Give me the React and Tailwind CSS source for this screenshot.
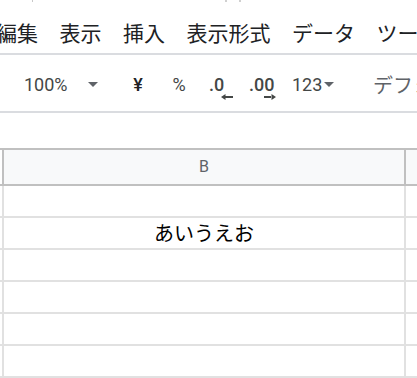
import React from 'react';

const menuItems = ['編集', '表示', '挿入', '表示形式', 'データ', 'ツール'];

const Caret = () => (
  <svg width="10" height="5" viewBox="0 0 10 5">
    <path d="M0 0 L10 0 L5 5 Z" fill="#5f6368" />
  </svg>
);

const Arrow = ({ dir }) => (
  <svg width="12" height="6" viewBox="0 0 12 6">
    {dir === 'left' ? (
      <path d="M0 3 L4.5 0 L4.5 6 Z M4 2 H12 V4 H4 Z" fill="#444746" />
    ) : (
      <path d="M12 3 L7.5 0 L7.5 6 Z M0 2 H8 V4 H0 Z" fill="#444746" />
    )}
  </svg>
);

const Sep = () => <div className="w-[2px] h-[30px] bg-[#dadce0]" />;

const rows = ['', 'あいうえお', '', '', '', ''];

export default function App() {
  return (
    <div className="w-[417px] h-[378px] overflow-hidden bg-white font-['Roboto','Noto_Sans_CJK_JP',sans-serif]">
      {/* Menu bar */}
      <div className="h-[55px] border-b-2 border-[#dadce0]">
        <div className="flex h-[3px]">
          <div className="ml-[32px] w-[1px] h-[2px] bg-[#c8c8c8]" />
          <div className="ml-[192px] w-[2px] h-[2px] bg-[#d0d0d0]" />
          <div className="ml-[12px] w-[2px] h-[2px] bg-[#d0d0d0]" />
        </div>
        <div className="flex items-center gap-[21.5px] ml-[-4px] pt-[8px] h-[50px] whitespace-nowrap text-[21px] leading-none text-[#202124] font-['Noto_Sans_CJK_JP',sans-serif]">
          {menuItems.map((m) => (
            <span key={m}>{m}</span>
          ))}
        </div>
      </div>

      {/* Toolbar */}
      <div className="h-[58px] pt-[3px] border-b-2 border-[#dadce0] flex items-center whitespace-nowrap text-[18px] text-[#444746] overflow-hidden">
        <div className="w-[2px] shrink-0" />
        <Sep />
        <div className="w-[22px] shrink-0" />
        <div className="w-[60px] shrink-0">100%</div>
        <div className="w-[18px] shrink-0 flex justify-center">
          <Caret />
        </div>
        <div className="w-[9px] shrink-0" />
        <Sep />
        <div className="w-[54px] shrink-0 text-center font-medium text-[#202124]">¥</div>
        <div className="w-[28px] shrink-0 text-center">%</div>
        <div className="w-[16px] shrink-0" />
        <div className="w-[40px] shrink-0 relative h-[30px] flex items-center">
          <span className="font-medium">.0</span>
          <div className="absolute left-[12px] top-[24px] flex">
            <Arrow dir="left" />
          </div>
        </div>
        <div className="w-[43px] shrink-0 relative h-[30px] flex items-center">
          <span className="font-medium">.00</span>
          <div className="absolute left-[15px] top-[24px] flex">
            <Arrow dir="right" />
          </div>
        </div>
        <div className="w-[32px] shrink-0">123</div>
        <div className="w-[14px] shrink-0 flex items-center">
          <Caret />
        </div>
        <div className="w-[11px] shrink-0" />
        <Sep />
        <div className="w-[24px] shrink-0" />
        <div className="font-['Noto_Sans_CJK_JP',sans-serif] text-[20px] text-[#5f6368]">デフォルト (Arial)</div>
      </div>

      {/* Gap */}
      <div className="h-[35px]" />

      {/* Grid */}
      <div className="font-['Liberation_Sans','Noto_Sans_CJK_JP',sans-serif]">
        <div className="flex h-[38px] border-y-2 border-[#c0c0c0]">
          <div className="w-[2px] shrink-0 bg-white" />
          <div className="w-[404px] shrink-0 border-x-2 border-[#c0c0c0] bg-[#f8f9fa] flex items-center justify-center text-[16px] text-[#5f6368] font-['Roboto',sans-serif]">
            B
          </div>
          <div className="flex-1 bg-[#f8f9fa]" />
        </div>
        {rows.map((r, i) => (
          <div key={i} className="flex h-[32px] border-b-2 border-[#e1e1e1]">
            <div className="w-[2px] shrink-0" />
            <div className="w-[404px] shrink-0 border-x-2 border-[#e1e1e1] flex items-center justify-center text-[20px] text-black pt-[2px]">
              {r}
            </div>
            <div className="flex-1" />
          </div>
        ))}
      </div>
    </div>
  );
}
